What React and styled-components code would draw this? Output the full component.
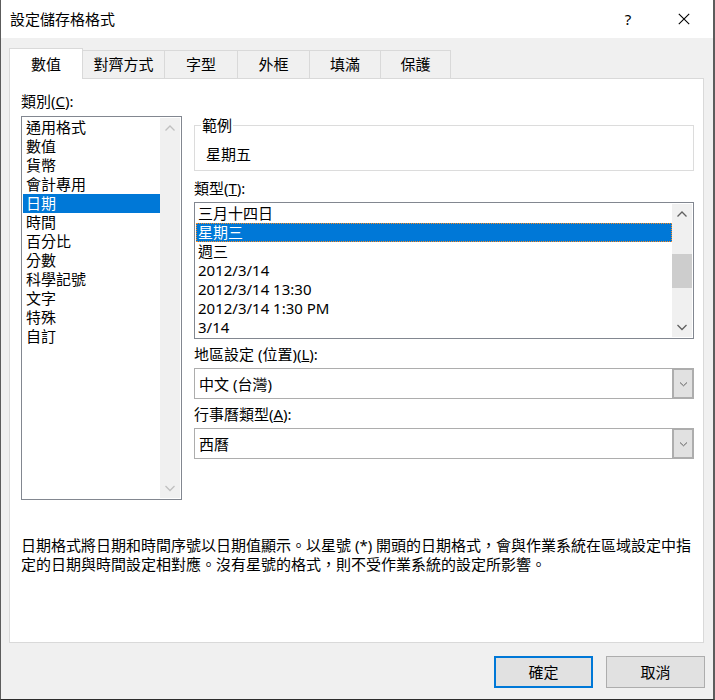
import React from 'react';
import styled, { createGlobalStyle } from 'styled-components';

const FONT = `"Noto Sans", "Noto Sans CJK TC", sans-serif`;

const Global = createGlobalStyle`
  html, body { margin: 0; padding: 0; background: #fff; }
  *, *::before, *::after { box-sizing: border-box; }
  body { font-family: ${FONT}; font-size: 15px; color: #000; }
`;

const Window = styled.div`
  width: 715px;
  height: 700px;
  display: flex;
  flex-direction: column;
  background: #f0f0f0;
  border-left: 1px solid #5c5c5c;
  border-right: 2px solid #5c5c5c;
  border-bottom: 1px solid #2b2b2b;
`;

const TitleBar = styled.div`
  height: 38px;
  flex: none;
  background: #fff;
  display: flex;
  align-items: center;
  padding: 0 6px 0 9px;
`;

const Title = styled.div`
  flex: 1;
  font-size: 15px;
  line-height: 19px;
`;

const TitleButton = styled.div`
  width: 46px;
  height: 38px;
  display: flex;
  align-items: center;
  justify-content: center;
  font-size: 15px;
  margin-left: ${p => p.$gap || 0}px;
`;

const Body = styled.div`
  flex: 1;
  display: flex;
  flex-direction: column;
  padding: 10px 8px 0 8px;
`;

const TabRow = styled.div`
  display: flex;
  align-items: flex-end;
  height: 30px;
  position: relative;
  z-index: 1;
`;

const Tab = styled.div`
  width: ${p => p.$w}px;
  height: ${p => (p.$active ? 31 : 28)}px;
  margin-bottom: ${p => (p.$active ? -1 : 0)}px;
  margin-left: ${p => (p.$first ? 0 : -1)}px;
  background: ${p => (p.$active ? '#fff' : '#f0f0f0')};
  border: 1px solid #d9d9d9;
  border-bottom: none;
  display: flex;
  align-items: center;
  justify-content: center;
  line-height: 19px;
  position: relative;
  z-index: ${p => (p.$active ? 2 : 1)};
`;

const Panel = styled.div`
  width: 695px;
  height: 565px;
  background: #fff;
  border: 1px solid #d9d9d9;
  padding: 13px 0 0 11px;
  display: flex;
  flex-direction: column;
`;

const Columns = styled.div`
  display: flex;
  gap: 12px;
  align-items: flex-start;
`;

const LeftCol = styled.div`
  width: 161px;
  display: flex;
  flex-direction: column;
`;

const RightCol = styled.div`
  width: 500px;
  margin-top: 24px;
  display: flex;
  flex-direction: column;
`;

const FieldLabel = styled.div`
  line-height: 19px;
  height: 19px;
  margin-top: ${p => p.$mt || 0}px;
  margin-bottom: ${p => p.$mb ?? 4}px;
  white-space: nowrap;
`;

const ListBox = styled.div`
  height: ${p => p.$h}px;
  border: 1px solid #828790;
  padding: 1px;
  display: flex;
  background: #fff;
`;

const ListItems = styled.div`
  flex: 1;
  overflow: hidden;
  display: flex;
  flex-direction: column;
`;

const ListItem = styled.div`
  flex: none;
  height: 19px;
  line-height: 19px;
  padding-left: ${p => p.$pad}px;
  white-space: nowrap;
  background: ${p => (p.$selected ? '#0078d7' : 'transparent')};
  color: ${p => (p.$selected ? '#fff' : '#000')};
  border: ${p => (p.$focus ? '1px dotted #ff8a1c' : 'none')};
  display: flex;
  align-items: center;
`;

const ScrollBar = styled.div`
  width: 20px;
  background: #f0f0f0;
  display: flex;
  flex-direction: column;
`;

const ArrowBox = styled.div`
  width: 20px;
  height: 20px;
  display: flex;
  align-items: center;
  justify-content: center;
`;

const Track = styled.div`
  flex: 1;
`;

const Thumb = styled.div`
  margin-top: ${p => p.$top}px;
  height: ${p => p.$h}px;
  background: #cdcdcd;
`;

const GroupBox = styled.fieldset`
  margin: 0;
  padding: 0 0 6px 0;
  border: 1px solid #dcdcdc;
  min-width: 0;
`;

const Legend = styled.legend`
  margin-left: 6px;
  padding: 0 1px;
  line-height: 19px;
  height: 19px;
`;

const Sample = styled.div`
  margin-top: 10px;
  padding-left: 11px;
  line-height: 19px;
  height: 19px;
`;

const Combo = styled.div`
  height: 31px;
  border: 1px solid #adadad;
  display: flex;
  background: #fff;
`;

const ComboValue = styled.div`
  flex: 1;
  padding-left: 4px;
  display: flex;
  align-items: center;
  white-space: nowrap;
`;

const ComboButton = styled.div`
  width: 22px;
  margin: -1px -1px -1px 0;
  background: #e1e1e1;
  border: 2px solid #adadad;
  display: flex;
  align-items: center;
  justify-content: center;
`;

const Description = styled.div`
  margin-top: 36px;
  width: 678px;
  line-height: 19px;
`;

const ButtonRow = styled.div`
  display: flex;
  justify-content: flex-end;
  gap: 13px;
  margin-top: 13px;
`;

const Button = styled.div`
  width: 99px;
  height: 32px;
  background: #e1e1e1;
  border: ${p => (p.$default ? '2px solid #0078d7' : '1px solid #adadad')};
  display: flex;
  align-items: center;
  justify-content: center;
  line-height: 19px;
`;

const Chevron = ({ up, color = '#606060', size = 20 }) => (
  <svg width={size} height={size} viewBox="0 0 20 20">
    <polyline
      points={up ? '5.5,12.5 10,8 14.5,12.5' : '5.5,8 10,12.5 14.5,8'}
      fill="none"
      stroke={color}
      strokeWidth="1.3"
    />
  </svg>
);

const SmallChevron = () => (
  <svg width="9" height="6" viewBox="0 0 9 6">
    <polyline points="1,1.5 4.5,4.8 8,1.5" fill="none" stroke="#606060" strokeWidth="1" />
  </svg>
);

const CloseIcon = () => (
  <svg width="12" height="12" viewBox="0 0 12 12">
    <path d="M0.8 0.8 L11.2 11.2 M11.2 0.8 L0.8 11.2" stroke="#000" strokeWidth="1.1" />
  </svg>
);

const tabs = [
  { label: '數值', w: 74, active: true },
  { label: '對齊方式', w: 83 },
  { label: '字型', w: 74 },
  { label: '外框', w: 73 },
  { label: '填滿', w: 72 },
  { label: '保護', w: 71 },
];

const categories = ['通用格式', '數值', '貨幣', '會計專用', '日期', '時間', '百分比', '分數', '科學記號', '文字', '特殊', '自訂'];
const types = ['三月十四日', '星期三', '週三', '2012/3/14', '2012/3/14 13:30', '2012/3/14 1:30 PM', '3/14'];

export default function App() {
  return (
    <>
      <Global />
      <Window>
        <TitleBar>
          <Title>設定儲存格格式</Title>
          <TitleButton>?</TitleButton>
          <TitleButton $gap={10}><CloseIcon /></TitleButton>
        </TitleBar>
        <Body>
          <TabRow>
            {tabs.map((t, i) => (
              <Tab key={t.label} $w={t.w} $active={t.active} $first={i === 0}>{t.label}</Tab>
            ))}
          </TabRow>
          <Panel>
            <Columns>
              <LeftCol>
                <FieldLabel $mb={5}>類別(<u>C</u>):</FieldLabel>
                <ListBox $h={384}>
                  <ListItems>
                    {categories.map(c => (
                      <ListItem key={c} $pad={3} $selected={c === '日期'}>{c}</ListItem>
                    ))}
                  </ListItems>
                  <ScrollBar>
                    <ArrowBox><Chevron up color="#c0c0c0" /></ArrowBox>
                    <Track />
                    <ArrowBox><Chevron color="#c0c0c0" /></ArrowBox>
                  </ScrollBar>
                </ListBox>
              </LeftCol>
              <RightCol>
                <GroupBox>
                  <Legend>範例</Legend>
                  <Sample>星期五</Sample>
                </GroupBox>
                <FieldLabel $mt={8}>類型(<u>T</u>):</FieldLabel>
                <ListBox $h={137}>
                  <ListItems>
                    {types.map(t => (
                      <ListItem key={t} $pad={t === '星期三' ? 1 : 2} $selected={t === '星期三'} $focus={t === '星期三'}>{t}</ListItem>
                    ))}
                  </ListItems>
                  <ScrollBar>
                    <ArrowBox><Chevron up /></ArrowBox>
                    <Track><Thumb $top={30} $h={34} /></Track>
                    <ArrowBox><Chevron /></ArrowBox>
                  </ScrollBar>
                </ListBox>
                <FieldLabel $mt={6}>地區設定 (位置)(<u>L</u>):</FieldLabel>
                <Combo>
                  <ComboValue>中文 (台灣)</ComboValue>
                  <ComboButton><SmallChevron /></ComboButton>
                </Combo>
                <FieldLabel $mt={6}>行事曆類型(<u>A</u>):</FieldLabel>
                <Combo>
                  <ComboValue>西曆</ComboValue>
                  <ComboButton><SmallChevron /></ComboButton>
                </Combo>
              </RightCol>
            </Columns>
            <Description>
              日期格式將日期和時間序號以日期值顯示。以星號 (*) 開頭的日期格式，會與作業系統在區域設定中指定的日期與時間設定相對應。沒有星號的格式，則不受作業系統的設定所影響。
            </Description>
          </Panel>
          <ButtonRow>
            <Button $default>確定</Button>
            <Button>取消</Button>
          </ButtonRow>
        </Body>
      </Window>
    </>
  );
}
